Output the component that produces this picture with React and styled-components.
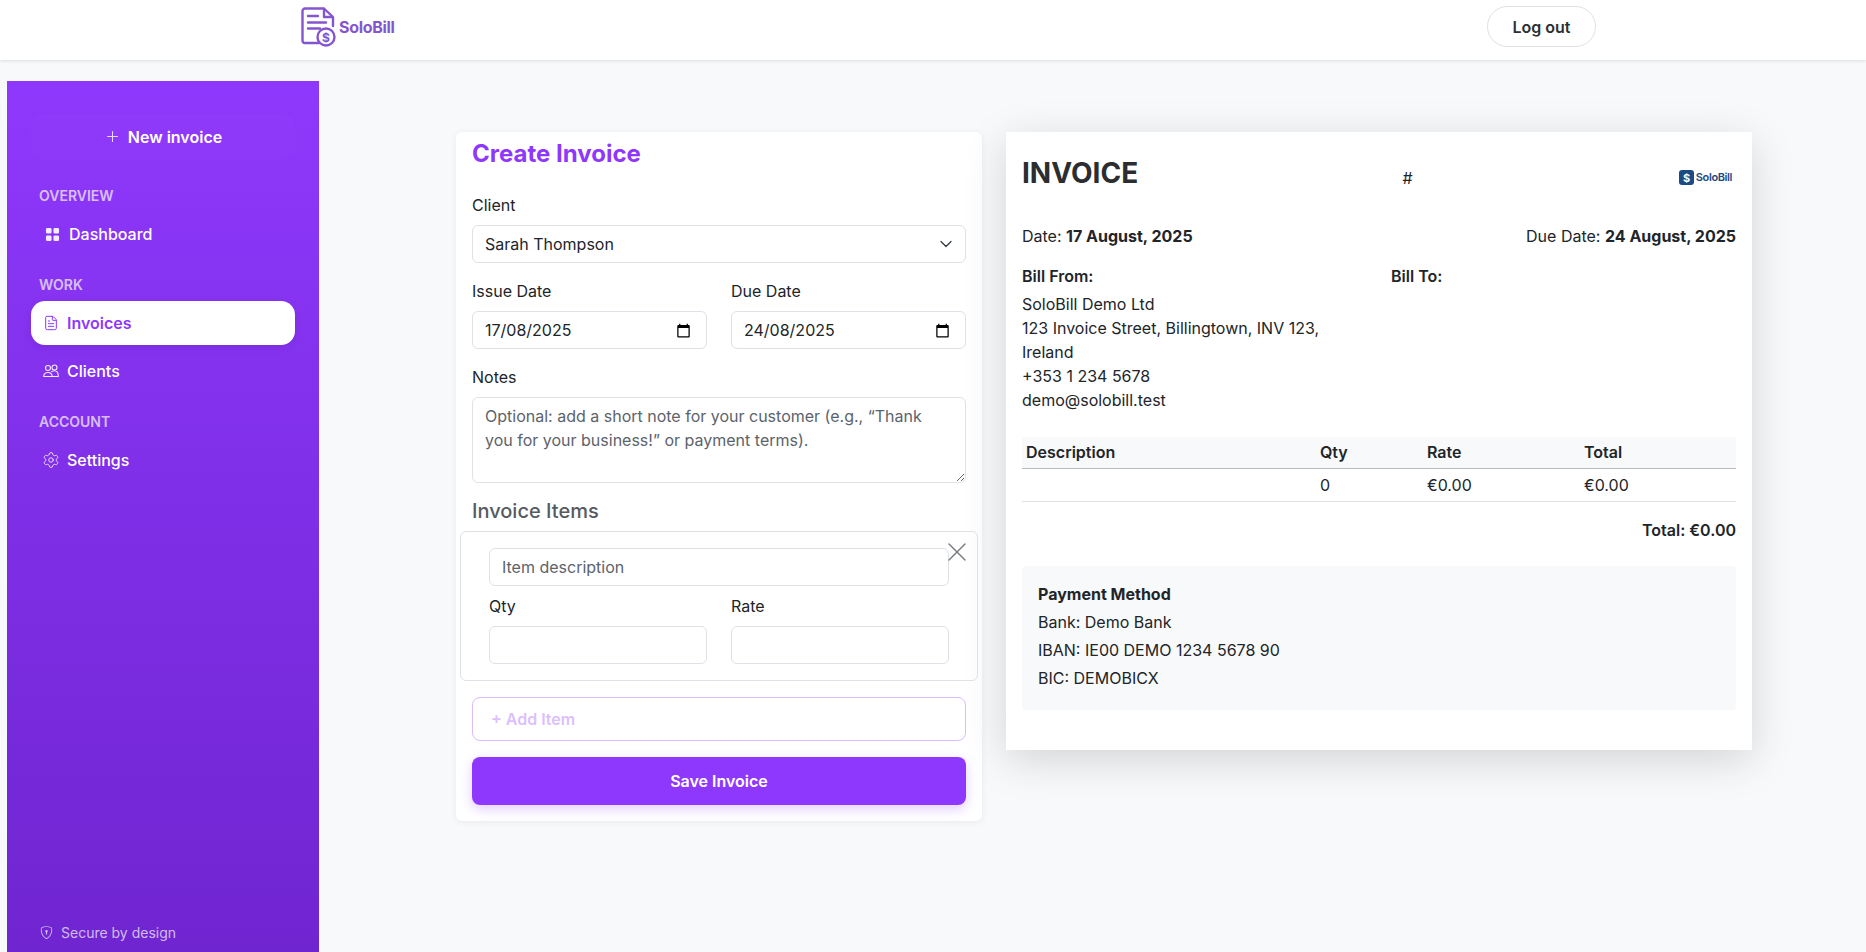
import React from 'react';
import styled, { createGlobalStyle } from 'styled-components';
import { ChevronDown, FileText, Plus, Settings, X } from 'lucide-react';
import { BsGridFill, BsShieldLock } from 'react-icons/bs';

const GlobalStyle = createGlobalStyle`
  * { box-sizing: border-box; }
  html, body { margin: 0; height: 100%; }
  body {
    background: #f8f9fa;
    color: #212529;
    font-family: Inter, "Noto Sans", sans-serif;
    font-size: 16px;
    line-height: 1.5;
    overflow: hidden;
  }
`;

const Page = styled.div`
  display: flex;
  flex-direction: column;
  height: 952px;
`;

const Header = styled.header`
  flex: none;
  display: flex;
  align-items: center;
  height: 60px;
  padding: 0 270px 0 301px;
  background: white;
  box-shadow: 0 1px 3px rgba(0, 0, 0, 0.12);
`;

const Brand = styled.div`
  display: flex;
  align-items: center;
  gap: 2px;
  margin-top: -6px;
`;

const BrandName = styled.span`
  color: #8555d0;
  font-size: 16px;
  font-weight: 700;
  letter-spacing: -0.3px;
`;

const LogoutButton = styled.button`
  margin-left: auto;
  margin-top: -7px;
  width: 109px;
  height: 41px;
  background: white;
  border: 1px solid #dee2e6;
  border-radius: 21px;
  color: #2b3035;
  font: 600 16px Inter, sans-serif;
`;

const Body = styled.div`
  flex: 1;
  display: flex;
  min-height: 0;
`;

const Sidebar = styled.aside`
  flex: none;
  display: flex;
  flex-direction: column;
  width: 312px;
  margin: 21px 0 0 7px;
  padding: 33px 24px 0;
  background: linear-gradient(180deg, #8f38fd 0%, #6f25d0 100%);
  color: white;
`;

const NewInvoice = styled.div`
  display: flex;
  align-items: center;
  justify-content: center;
  gap: 7px;
  height: 45px;
  margin-bottom: 26px;
  font-weight: 600;
  border-radius: 12px;
  background: rgba(255, 255, 255, 0.01);
  svg { opacity: 0.8; }
`;

const NavHeading = styled.div`
  height: 20px;
  margin: 1px 0 6px 8px;
  color: rgba(255, 255, 255, 0.7);
  font-size: 14px;
  font-weight: 600;
  line-height: 20px;
`;

const NavGroup = styled.nav`
  display: flex;
  flex-direction: column;
  gap: 4px;
  margin-bottom: 18px;
`;

const NavItem = styled.div`
  display: flex;
  align-items: center;
  gap: 8px;
  height: 44px;
  padding-left: 12px;
  border-radius: 14px;
  background: ${props => props.$active ? 'white' : 'transparent'};
  color: ${props => props.$active ? '#8f38fd' : 'white'};
  font-weight: ${props => props.$active ? 600 : 500};
  box-shadow: ${props => props.$active ? '0 2px 8px rgba(0, 0, 0, 0.1)' : 'none'};
`;

const IconSlot = styled.span`
  flex: none;
  display: flex;
  align-items: center;
  justify-content: center;
  width: ${props => props.$wide ? '18px' : '16px'};
  height: 16px;
  opacity: ${props => props.$active ? 1 : 0.9};
  svg { flex: none; }
`;

const SecureNote = styled.div`
  display: flex;
  align-items: center;
  gap: 8px;
  margin: auto 0 9px 9px;
  color: rgba(255, 255, 255, 0.7);
  font-size: 14px;
`;

const Main = styled.main`
  display: flex;
  align-items: flex-start;
  gap: 24px;
  padding: 72px 0 0 137px;
`;

const FormCard = styled.section`
  width: 526px;
  padding: 7px 16px 16px;
  background: white;
  border-radius: 6px;
  box-shadow: 0 1px 6px rgba(0, 0, 0, 0.07);
`;

const Title = styled.h1`
  margin: 0 0 25px;
  color: #8f38fd;
  font-size: 24px;
  font-weight: 700;
  line-height: 29px;
`;

const Field = styled.div`
  flex: 1;
  min-width: 0;
  margin-bottom: ${props => props.$flush ? '0' : '16px'};
`;

const Label = styled.label`
  display: block;
  margin-bottom: 8px;
  line-height: 24px;
`;

const FieldRow = styled.div`
  display: flex;
  gap: 24px;
`;

const FieldBox = styled.div`
  display: flex;
  align-items: center;
  justify-content: space-between;
  height: 38px;
  padding: 0 15px 0 12px;
  background: white;
  border: 1px solid #dee2e6;
  border-radius: 6px;
`;

const BareInput = styled.input`
  flex: 1;
  min-width: 0;
  padding: 0;
  border: none;
  outline: none;
  color: #212529;
  font: 16px Inter, sans-serif;
`;

const SelectChevron = styled(ChevronDown)`
  flex: none;
  margin-right: -6px;
  color: #343a40;
`;

const TextInput = styled.input`
  display: block;
  width: 100%;
  height: 38px;
  padding: 0 12px;
  background: white;
  border: 1px solid #dee2e6;
  border-radius: 6px;
  color: #212529;
  font: 16px Inter, sans-serif;
  &::placeholder { color: #5c636a; opacity: 1; }
`;

const Notes = styled.textarea`
  display: block;
  width: 100%;
  height: 86px;
  padding: 6px 12px;
  border: 1px solid #dee2e6;
  border-radius: 6px;
  font: 16px/24px Inter, sans-serif;
  &::placeholder { color: #5c636a; opacity: 1; }
`;

const ItemsHeading = styled.h2`
  margin: 16px 0 8px;
  color: #565b60;
  font-size: 20px;
  font-weight: 500;
  line-height: 24px;
`;

const ItemBox = styled.div`
  position: relative;
  display: flex;
  flex-direction: column;
  gap: 8px;
  margin: 0 -12px;
  padding: 16px 28px 16px 28px;
  border: 1px solid #dee2e6;
  border-radius: 6px;
`;

const RemoveItem = styled.button`
  position: absolute;
  top: 4px;
  right: 4px;
  display: flex;
  padding: 0;
  background: none;
  border: none;
  color: #777b80;
`;

const AddItem = styled.button`
  display: block;
  width: 100%;
  height: 44px;
  margin-top: 16px;
  padding: 0 18px;
  background: white;
  border: 1px solid #d9bcfd;
  border-radius: 8px;
  color: #dcbffc;
  font: 600 16px Inter, sans-serif;
  text-align: left;
`;

const SaveButton = styled.button`
  display: block;
  width: 100%;
  height: 48px;
  margin-top: 16px;
  background: #8f38fd;
  border: none;
  border-radius: 8px;
  box-shadow: 0 4px 12px rgba(143, 56, 253, 0.25);
  color: white;
  font: 600 16px Inter, sans-serif;
`;

const Preview = styled.section`
  width: 746px;
  padding: 24px 16px 40px;
  background: white;
  box-shadow: 0 10px 40px rgba(0, 0, 0, 0.15);
`;

const PreviewTop = styled.div`
  display: flex;
  align-items: center;
  justify-content: space-between;
  height: 44px;
  margin-bottom: 24px;
`;

const InvoiceTitle = styled.h2`
  margin: 0 0 10px;
  color: #2b2d30;
  font-size: 28px;
  font-weight: 700;
  line-height: 34px;
`;

const HashMark = styled.span`
  margin-left: -2px;
`;

const SmallLogo = styled.div`
  display: flex;
  align-items: center;
  gap: 2px;
  margin: -2px 4px 0 0;
  color: #1d4a80;
  font-size: 11px;
  font-weight: 600;
  letter-spacing: -0.4px;
`;

const DatesRow = styled.div`
  display: flex;
  justify-content: space-between;
  margin-bottom: 16px;
`;

const BillGrid = styled.div`
  display: grid;
  grid-template-columns: 1fr 1fr;
  gap: 24px;
  margin-bottom: 25px;
`;

const BillHeading = styled.div`
  margin-bottom: 4px;
  font-weight: 600;
`;

const ItemsTable = styled.table`
  width: 100%;
  border-collapse: collapse;
  table-layout: fixed;
`;

const Th = styled.th`
  width: ${props => props.$width};
  height: 31px;
  padding: 0 4px;
  background: #f8f9fa;
  border-bottom: 1px solid #b8bcc0;
  font-weight: 600;
  text-align: left;
`;

const Td = styled.td`
  height: 33px;
  padding: 0 4px;
  border-bottom: 1px solid #dee2e6;
`;

const GrandTotal = styled.div`
  margin: 16px 0 24px;
  font-weight: 600;
  text-align: right;
`;

const PaymentBox = styled.div`
  padding: 14px 16px 18px;
  background: #f8f9fa;
  border-radius: 4px;
  line-height: 28px;
`;

const DocumentLogo = () => (
  <svg width="36" height="40" viewBox="0 0 36 40" fill="none" stroke="#8555d0" strokeWidth="2.4" strokeLinecap="round" strokeLinejoin="round">
    <path d="M18 36H4a2.500 2.500 0 0 1-2.500-2.500V4A2.500 2.500 0 0 1 4 1.500H23L32 10V19" />
    <path d="M23 2v8h8" />
    <path d="M7 9h10M7 15.500h18M7 21.500h12" />
    <circle cx="25" cy="30" r="8.500" />
    <text x="25" y="34.500" textAnchor="middle" fontSize="12" fontWeight="700" fill="#8555d0" stroke="none" fontFamily="Inter, sans-serif">$</text>
  </svg>
);

const CalendarIcon = () => (
  <svg width="15" height="15" viewBox="0 0 24 24" fill="black">
    <path d="M20 3h-1V1h-2v2H7V1H5v2H4c-1.100 0-2 .9-2 2v16c0 1.100.9 2 2 2h16c1.100 0 2-.9 2-2V5c0-1.100-.9-2-2-2zm0 18H4V8h16v13z" />
  </svg>
);

const PeopleIcon = () => (
  <svg width="16" height="16" viewBox="0 0 16 16" fill="none" stroke="currentColor" strokeWidth="1.100" strokeLinecap="round" strokeLinejoin="round">
    <circle cx="5" cy="5" r="2.500" />
    <circle cx="11.500" cy="4.500" r="2.500" />
    <path d="M.7 13.500c0-2.500 1.800-4 4.300-4s4 1.500 4.300 4z" />
    <path d="M8.500 8.600c.9-.6 1.900-.9 3-.9 2.200 0 3.800 1.800 3.800 5.800h-6" />
  </svg>
);

const SmallCoin = () => (
  <svg width="15" height="15" viewBox="0 0 15 15">
    <rect width="15" height="15" rx="3" fill="#1d4a80" />
    <text x="7.500" y="11.500" textAnchor="middle" fontSize="11" fontWeight="700" fill="white" fontFamily="Inter, sans-serif">$</text>
  </svg>
);

const App = () => (
  <Page>
    <GlobalStyle />
    <Header>
      <Brand>
        <DocumentLogo />
        <BrandName>SoloBill</BrandName>
      </Brand>
      <LogoutButton>Log out</LogoutButton>
    </Header>
    <Body>
      <Sidebar>
        <NewInvoice>
          <Plus size={17} strokeWidth={1.5} />
          New invoice
        </NewInvoice>
        <NavHeading>OVERVIEW</NavHeading>
        <NavGroup>
          <NavItem>
            <IconSlot $wide><BsGridFill size={15} /></IconSlot>
            Dashboard
          </NavItem>
        </NavGroup>
        <NavHeading>WORK</NavHeading>
        <NavGroup>
          <NavItem $active>
            <IconSlot $active><FileText size={16} strokeWidth={1.5} /></IconSlot>
            Invoices
          </NavItem>
          <NavItem>
            <IconSlot><PeopleIcon /></IconSlot>
            Clients
          </NavItem>
        </NavGroup>
        <NavHeading>ACCOUNT</NavHeading>
        <NavGroup>
          <NavItem>
            <IconSlot><Settings size={18} strokeWidth={1.2} /></IconSlot>
            Settings
          </NavItem>
        </NavGroup>
        <SecureNote>
          <BsShieldLock size={13} />
          Secure by design
        </SecureNote>
      </Sidebar>
      <Main>
        <FormCard>
          <Title>Create Invoice</Title>
          <Field>
            <Label>Client</Label>
            <FieldBox>
              <BareInput readOnly value="Sarah Thompson" />
              <SelectChevron size={20} strokeWidth={1.5} />
            </FieldBox>
          </Field>
          <FieldRow>
            <Field>
              <Label>Issue Date</Label>
              <FieldBox>
                <BareInput readOnly value="17/08/2025" />
                <CalendarIcon />
              </FieldBox>
            </Field>
            <Field>
              <Label>Due Date</Label>
              <FieldBox>
                <BareInput readOnly value="24/08/2025" />
                <CalendarIcon />
              </FieldBox>
            </Field>
          </FieldRow>
          <Field $flush>
            <Label>Notes</Label>
            <Notes placeholder="Optional: add a short note for your customer (e.g., “Thank you for your business!” or payment terms)." />
          </Field>
          <ItemsHeading>Invoice Items</ItemsHeading>
          <ItemBox>
            <RemoveItem><X size={32} strokeWidth={1} /></RemoveItem>
            <TextInput placeholder="Item description" />
            <FieldRow>
              <Field $flush>
                <Label>Qty</Label>
                <TextInput />
              </Field>
              <Field $flush>
                <Label>Rate</Label>
                <TextInput />
              </Field>
            </FieldRow>
          </ItemBox>
          <AddItem>+ Add Item</AddItem>
          <SaveButton>Save Invoice</SaveButton>
        </FormCard>
        <Preview>
          <PreviewTop>
            <InvoiceTitle>INVOICE</InvoiceTitle>
            <HashMark>#</HashMark>
            <SmallLogo>
              <SmallCoin />
              SoloBill
            </SmallLogo>
          </PreviewTop>
          <DatesRow>
            <span>Date: <strong>17 August, 2025</strong></span>
            <span>Due Date: <strong>24 August, 2025</strong></span>
          </DatesRow>
          <BillGrid>
            <div>
              <BillHeading>Bill From:</BillHeading>
              <div>SoloBill Demo Ltd</div>
              <div>123 Invoice Street, Billingtown, INV 123, Ireland</div>
              <div>+353 1 234 5678</div>
              <div>demo@solobill.test</div>
            </div>
            <div>
              <BillHeading>Bill To:</BillHeading>
            </div>
          </BillGrid>
          <ItemsTable>
            <thead>
              <tr>
                <Th $width="294px">Description</Th>
                <Th $width="107px">Qty</Th>
                <Th $width="157px">Rate</Th>
                <Th $width="156px">Total</Th>
              </tr>
            </thead>
            <tbody>
              <tr>
                <Td></Td>
                <Td>0</Td>
                <Td>€0.00</Td>
                <Td>€0.00</Td>
              </tr>
            </tbody>
          </ItemsTable>
          <GrandTotal>Total: €0.00</GrandTotal>
          <PaymentBox>
            <strong>Payment Method</strong>
            <div>Bank: Demo Bank</div>
            <div>IBAN: IE00 DEMO 1234 5678 90</div>
            <div>BIC: DEMOBICX</div>
          </PaymentBox>
        </Preview>
      </Main>
    </Body>
  </Page>
);

export default App;
